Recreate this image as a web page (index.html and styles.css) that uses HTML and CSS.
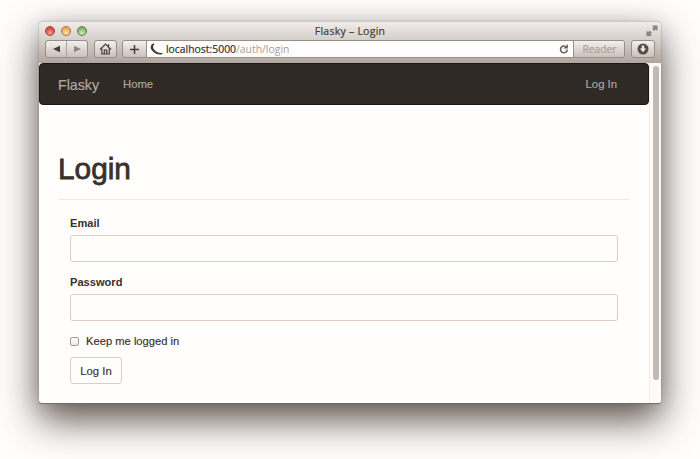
FILE: index.html
```html
<!DOCTYPE html>
<html lang="en">
<head>
<meta charset="utf-8">
<title>Flasky - Login</title>
<link rel="stylesheet" href="styles.css">
</head>
<body>
<div class="window">
  <header class="chrome">
    <div class="titlebar">
      <div class="lights"><i class="light red"></i><i class="light amber"></i><i class="light green"></i></div>
      <div class="title">Flasky – Login</div>
      <svg class="expand" width="12" height="12" viewBox="0 0 12 12"><path d="M6 .5H11.500V6L9.800 4.300 8.200 5.900 6.100 3.800 7.700 2.200zM.5 5.500L2.200 7.200 3.800 5.600 5.900 7.700 4.300 9.300 6 11H.5z"/></svg>
    </div>
    <div class="toolbar">
      <div class="button history">
        <span><svg width="9" height="8" viewBox="0 0 9 8"><path d="M1 4l7-3.300v6.600z" fill="#463e39"/></svg></span>
        <span><svg width="9" height="8" viewBox="0 0 9 8"><path d="M8 4L1 .7v6.600z" fill="#8f8580"/></svg></span>
      </div>
      <div class="button home"><svg width="13" height="12" viewBox="0 0 13 12" fill="none" stroke="#4b423e" stroke-width="1.200"><path d="M1 6.500L6.500 1 12 6.500M2.800 5.500V11h7.400V5.500M9.500 3.500V1.300M5.300 11V7.200h2.400V11"/></svg></div>
      <div class="location">
        <div class="add"><svg width="9" height="9" viewBox="0 0 9 9"><path d="M4.500 0v9M0 4.500h9" stroke="#463e39" stroke-width="1.500"/></svg></div>
        <div class="address">
          <svg width="13" height="12" viewBox="0 0 13 12"><path d="M4 .2C.6 1 .1 4.300 1.500 6.700 3.700 10.300 7.800 12 12.500 11.300V9.900C8.600 10.300 5.900 9 4.100 6.600 2.800 4.700 2.600 2.600 4.500 1z" fill="#3d3430"/></svg>
          <span class="url"><span class="host">localhost:5000</span><span class="path">/auth/login</span></span>
          <svg class="reload" width="10" height="10" viewBox="0 0 10 10"><path d="M6.400 2.300A3.400 3.400 0 1 0 8.300 5.700" fill="none" stroke="#665b55" stroke-width="1.500"/><path d="M8.800 0V4.400H4.400z" fill="#665b55"/></svg>
        </div>
        <div class="reader">Reader</div>
      </div>
      <div class="button download"><svg width="12" height="12" viewBox="0 0 12 12"><circle cx="6" cy="6" r="5.500" fill="#574e49"/><path d="M4.800 2.600h2.400v3h2L6 9.200 2.800 5.600h2z" fill="#eee9e6"/></svg></div>
    </div>
  </header>
  <div class="viewport">
    <main class="page">
      <nav class="navbar"><a class="brand">Flasky</a><a class="link">Home</a><a class="link login-link">Log In</a></nav>
      <div class="container">
        <h1>Login</h1>
        <form>
          <label class="label" for="email">Email</label>
          <input class="field" id="email" type="text">
          <label class="label" for="password">Password</label>
          <input class="field" id="password" type="password">
          <label class="remember"><input type="checkbox"><span>Keep me logged in</span></label>
          <button class="submit" type="button">Log In</button>
        </form>
      </div>
    </main>
    <div class="scrollbar"><div class="thumb"></div></div>
  </div>
</div>
</body>
</html>
```
FILE: styles.css
```css
* { box-sizing: border-box; }
body {
  margin: 0;
  height: 459px;
  padding: 21px 39px 0;
  overflow: hidden;
  background: #fffefd;
  font-family: "Liberation Sans", sans-serif;
  font-size: 11.2px;
  color: #3a302b;
}
svg { display: block; flex: none; }
.window {
  width: 622px;
  height: 382px;
  display: flex;
  flex-direction: column;
  border-radius: 4px 4px 3px 3px;
  background: #fffefd;
  box-shadow: 0 0 1px #8b7f78, 0 1px 1px #756a64, 0 17px 38px rgba(62, 48, 41, .82), 0 4px 20px rgba(70, 55, 48, .16);
}
.chrome {
  height: 42px;
  border-top: 1px solid #d3cac4;
  border-radius: 4px 4px 0 0;
  background: linear-gradient(#f0ece9, #d3ccc8 48%, #b0a6a0);
  font-family: "Open Sans", sans-serif;
}
.titlebar {
  height: 18px;
  display: grid;
  grid-template-columns: 100px 1fr 100px;
  align-items: center;
  padding: 0 3px 0 6px;
}
.lights { display: flex; gap: 6px; }
.light {
  width: 10px;
  height: 10px;
  border-radius: 50%;
  border: 1px solid #8d6259;
}
.red { background: radial-gradient(circle at 50% 75%, #f6a293, #d84b43 65%); border-color: #a23f37; }
.amber { background: radial-gradient(circle at 50% 75%, #ffe6a0, #e9a94b 70%); border-color: #a9733a; }
.green { background: radial-gradient(circle at 50% 75%, #d5edb4, #7caf69 70%); border-color: #597f4b; }
.title {
  padding-right: 3px;
  text-align: center;
  font-size: 10.5px;
  line-height: 17px;
  letter-spacing: .25px;
  color: #443b36;
  -webkit-text-stroke: .2px #443b36;
}
.expand { justify-self: end; fill: #8b8079; }
.toolbar { height: 18px; display: flex; padding: 0 6px; gap: 6px; }
.button, .location { border: 1px solid #988d87; border-radius: 3px; }
.button, .add, .reader {
  display: flex;
  align-items: center;
  justify-content: center;
  background: linear-gradient(#f3f0ed, #c9c1bc);
}
.history { width: 43px; }
.history span { flex: 1; height: 100%; display: flex; align-items: center; justify-content: center; }
.history span + span { border-left: 1px solid #aaa09a; }
.home { width: 23px; }
.location { flex: 1; display: flex; overflow: hidden; margin-left: -1px; }
.add { width: 24px; border-right: 1px solid #988d87; }
.address { flex: 1; display: flex; align-items: center; padding: 0 4px 0 3px; background: #fffefd; }
.url { margin-left: 3px; font-size: 10.4px; line-height: 16px; white-space: nowrap; }
.host { color: #382e29; -webkit-text-stroke: .2px #382e29; }
.path { color: #ab9c93; }
.reload { margin-left: auto; }
.reader {
  width: 51px;
  padding-left: 1px;
  border-left: 1px solid #988d87;
  color: #aba09a;
  font-size: 10.3px;
  line-height: 16px;
  -webkit-text-stroke: .2px #aba09a;
}
.download { width: 24px; }
.viewport { flex: 1; display: flex; min-height: 0; }
.page { flex: 1; }
.navbar {
  height: 42px;
  display: flex;
  align-items: center;
  padding: 0 31px 0 19px;
  border: 1px solid #1d1814;
  border-radius: 4px;
  background: #302a26;
  color: #b1a6a0;
}
.brand { width: 65px; padding-top: 1px; font-size: 14.2px; margin-left: -1px; -webkit-text-stroke: .2px #b1a6a0; }
.link { font-size: 11.3px; -webkit-text-stroke: .15px #b1a6a0; }
.login-link { margin-left: auto; }
.container { padding: 47px 19px 0 19px; }
h1 {
  height: 48px;
  margin: 0 0 15px;
  border-bottom: 1px solid #f0ebe8;
  font-size: 29.8px;
  font-weight: 400;
  line-height: 34px;
  -webkit-text-stroke: .8px #3a302b;
}
form { display: flex; flex-direction: column; padding: 0 12px; }
.label { font-weight: 700; font-size: 11.1px; line-height: 16px; margin-bottom: 4px; }
.field {
  width: 100%;
  height: 27px;
  margin: 0 0 12px;
  border: 1px solid #dccbc1;
  border-radius: 3px;
  background: #fffefd;
  outline: none;
}
.remember { display: flex; align-items: center; height: 16px; margin-bottom: 8px; -webkit-text-stroke: .15px #3a302b; }
.remember input {
  appearance: none;
  width: 9px;
  height: 9px;
  margin: 0 7px 0 0;
  border: 1px solid #ab9a91;
  border-radius: 2px;
  background: linear-gradient(#fff, #eee8e4);
}
.submit {
  width: 52px;
  height: 27px;
  padding: 0;
  border: 1px solid #dccbc1;
  border-radius: 3px;
  background: #fffefd;
  color: #3a302b;
  font: 11.3px "Liberation Sans", sans-serif;
  -webkit-text-stroke: .15px #3a302b;
}
.scrollbar { width: 12px; padding: 3px 2px 0 3px; border-left: 1px solid #eeebe9; background: #fdfbfa; border-radius: 0 0 3px; }
.thumb { width: 6px; height: 314px; border-radius: 3px; background: #c3b8b2; }
```
